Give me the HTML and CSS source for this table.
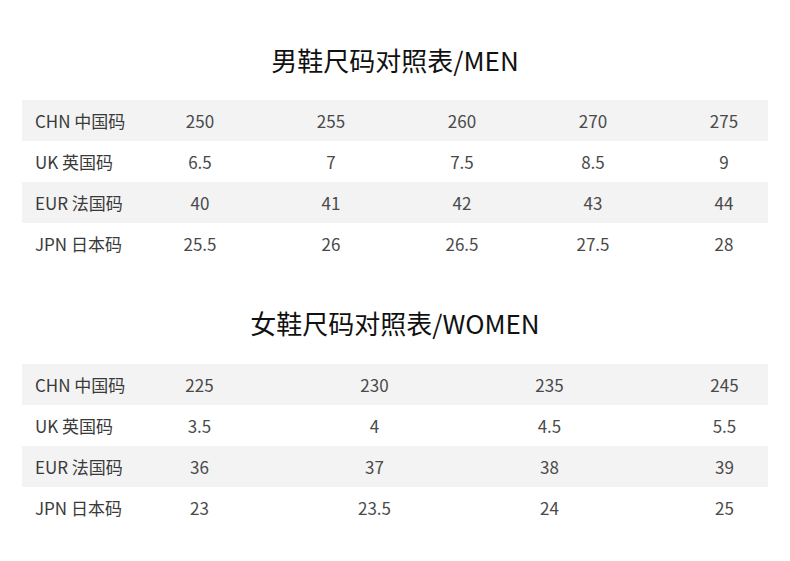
FILE: index.html
```html
<!DOCTYPE html>
<html lang="zh">
<head>
<meta charset="utf-8">
<link rel="stylesheet" href="styles.css">
</head>
<body>
<section class="chart chart-men">
  <h2 class="title">男鞋尺码对照表/MEN</h2>
  <div class="table">
    <div class="row shade"><span class="label">CHN 中国码</span><span>250</span><span>255</span><span>260</span><span>270</span><span>275</span></div>
    <div class="row"><span class="label">UK 英国码</span><span>6.5</span><span>7</span><span>7.5</span><span>8.5</span><span>9</span></div>
    <div class="row shade"><span class="label">EUR 法国码</span><span>40</span><span>41</span><span>42</span><span>43</span><span>44</span></div>
    <div class="row"><span class="label">JPN 日本码</span><span>25.5</span><span>26</span><span>26.5</span><span>27.5</span><span>28</span></div>
  </div>
</section>
<section class="chart chart-women">
  <h2 class="title">女鞋尺码对照表/WOMEN</h2>
  <div class="table">
    <div class="row shade"><span class="label">CHN 中国码</span><span>225</span><span>230</span><span>235</span><span>245</span></div>
    <div class="row"><span class="label">UK 英国码</span><span>3.5</span><span>4</span><span>4.5</span><span>5.5</span></div>
    <div class="row shade"><span class="label">EUR 法国码</span><span>36</span><span>37</span><span>38</span><span>39</span></div>
    <div class="row"><span class="label">JPN 日本码</span><span>23</span><span>23.5</span><span>24</span><span>25</span></div>
  </div>
</section>
</body>
</html>
```
FILE: styles.css
```css
html, body {
  margin: 0;
  padding: 0;
  background: #ffffff;
}
body {
  font-family: "Noto Sans CJK SC", "Noto Sans", sans-serif;
  color: #333;
}
.chart {
  padding: 0 22px;
}
.title {
  margin: 0;
  font-size: 26px;
  font-weight: 400;
  line-height: 40px;
  text-align: center;
  color: #111;
}
.chart-men .title {
  margin-top: 40px;
  margin-bottom: 20px;
}
.chart-women .title {
  margin-top: 39px;
  margin-bottom: 21px;
}
.row {
  display: grid;
  height: 41px;
  align-items: center;
  padding-left: 13px;
  font-size: 17px;
  color: #4a4a4a;
}
.chart-men .row {
  grid-template-columns: 78px repeat(5, 88px);
  column-gap: 43px;
}
.chart-women .row {
  grid-template-columns: 32px repeat(4, 85px);
  column-gap: 90px;
}
.row span {
  text-align: center;
  line-height: 41px;
  white-space: nowrap;
}
.row .label {
  text-align: left;
  color: #3a3a3a;
}
.shade {
  background: #f3f3f3;
}
```
